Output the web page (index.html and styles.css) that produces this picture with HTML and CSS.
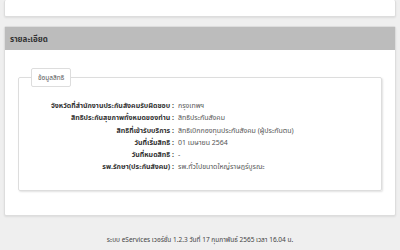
FILE: index.html
```html
<!DOCTYPE html>
<html>
<head>
    <meta charset="utf-8">
    <title>รายละเอียด</title>
    <link rel="stylesheet" href="styles.css">
</head>
<body>
    <div class="panel panel-top"></div>

    <div class="panel">
        <div class="panel-heading">รายละเอียด</div>
        <div class="panel-body">
            <fieldset class="group">
                <legend class="group-title">ข้อมูลสิทธิ</legend>
                <div class="info">
                    <div class="info-label">จังหวัดที่สำนักงานประกันสังคมรับผิดชอบ :</div>
                    <div class="info-value">กรุงเทพฯ</div>

                    <div class="info-label">สิทธิประกันสุขภาพทั้งหมดของท่าน :</div>
                    <div class="info-value">สิทธิประกันสังคม</div>

                    <div class="info-label">สิทธิที่เข้ารับบริการ :</div>
                    <div class="info-value">สิทธิเบิกกองทุนประกันสังคม (ผู้ประกันตน)</div>

                    <div class="info-label">วันที่เริ่มสิทธิ :</div>
                    <div class="info-value">01 เมษายน 2564</div>

                    <div class="info-label">วันที่หมดสิทธิ :</div>
                    <div class="info-value">-</div>

                    <div class="info-label">รพ.รักษา(ประกันสังคม) :</div>
                    <div class="info-value">รพ.ทั่วไปขนาดใหญ่ราษฎร์บูรณะ</div>
                </div>
            </fieldset>
        </div>
    </div>

    <div class="footer">ระบบ eServices เวอร์ชั่น 1.2.3 วันที่ 17 กุมภาพันธ์ 2565 เวลา 16.04 น.</div>
</body>
</html>
```

FILE: styles.css
```css
html {
    font-family: "Noto Sans", "Noto Sans Thai", sans-serif;
    font-size: 7px;
    color: #333;
}

body {
    margin: 0;
    padding: 0 4px;
    background-color: #efefef;
    overflow: hidden;
}

.panel {
    background-color: #fff;
    border: 1px solid #ddd;
    border-radius: 2px;
    box-shadow: 0 1px 2px rgba(0, 0, 0, 0.08);
}

.panel-top {
    height: 16px;
    border-top: none;
    margin-bottom: 9px;
}

.panel-heading {
    background-color: #bcbcbc;
    height: 23px;
    line-height: 23px;
    padding: 0 5px;
    font-weight: bold;
    font-size: 8px;
}

.panel-body {
    padding: 18px 13px 24px 13px;
}

.group {
    margin: 0;
    padding: 13px 0 16px 0;
    border: 1px solid #ddd;
    border-radius: 2px;
    box-shadow: 1px 1px 2px rgba(0, 0, 0, 0.12);
}

.group-title {
    margin-left: 12px;
    padding: 0 6px;
    height: 17px;
    line-height: 17px;
    border: 1px solid #ddd;
    border-radius: 2px;
    background-color: #fff;
    color: #555;
    font-size: 6.5px;
}

.info {
    display: grid;
    grid-template-columns: 155px auto;
    column-gap: 4px;
    row-gap: 0;
}

.info-label {
    text-align: right;
    font-weight: bold;
    line-height: 12.3px;
}

.info-value {
    color: #555;
    line-height: 12.3px;
}

.footer {
    text-align: center;
    color: #444;
    font-size: 6.5px;
    padding-top: 19px;
}
```
